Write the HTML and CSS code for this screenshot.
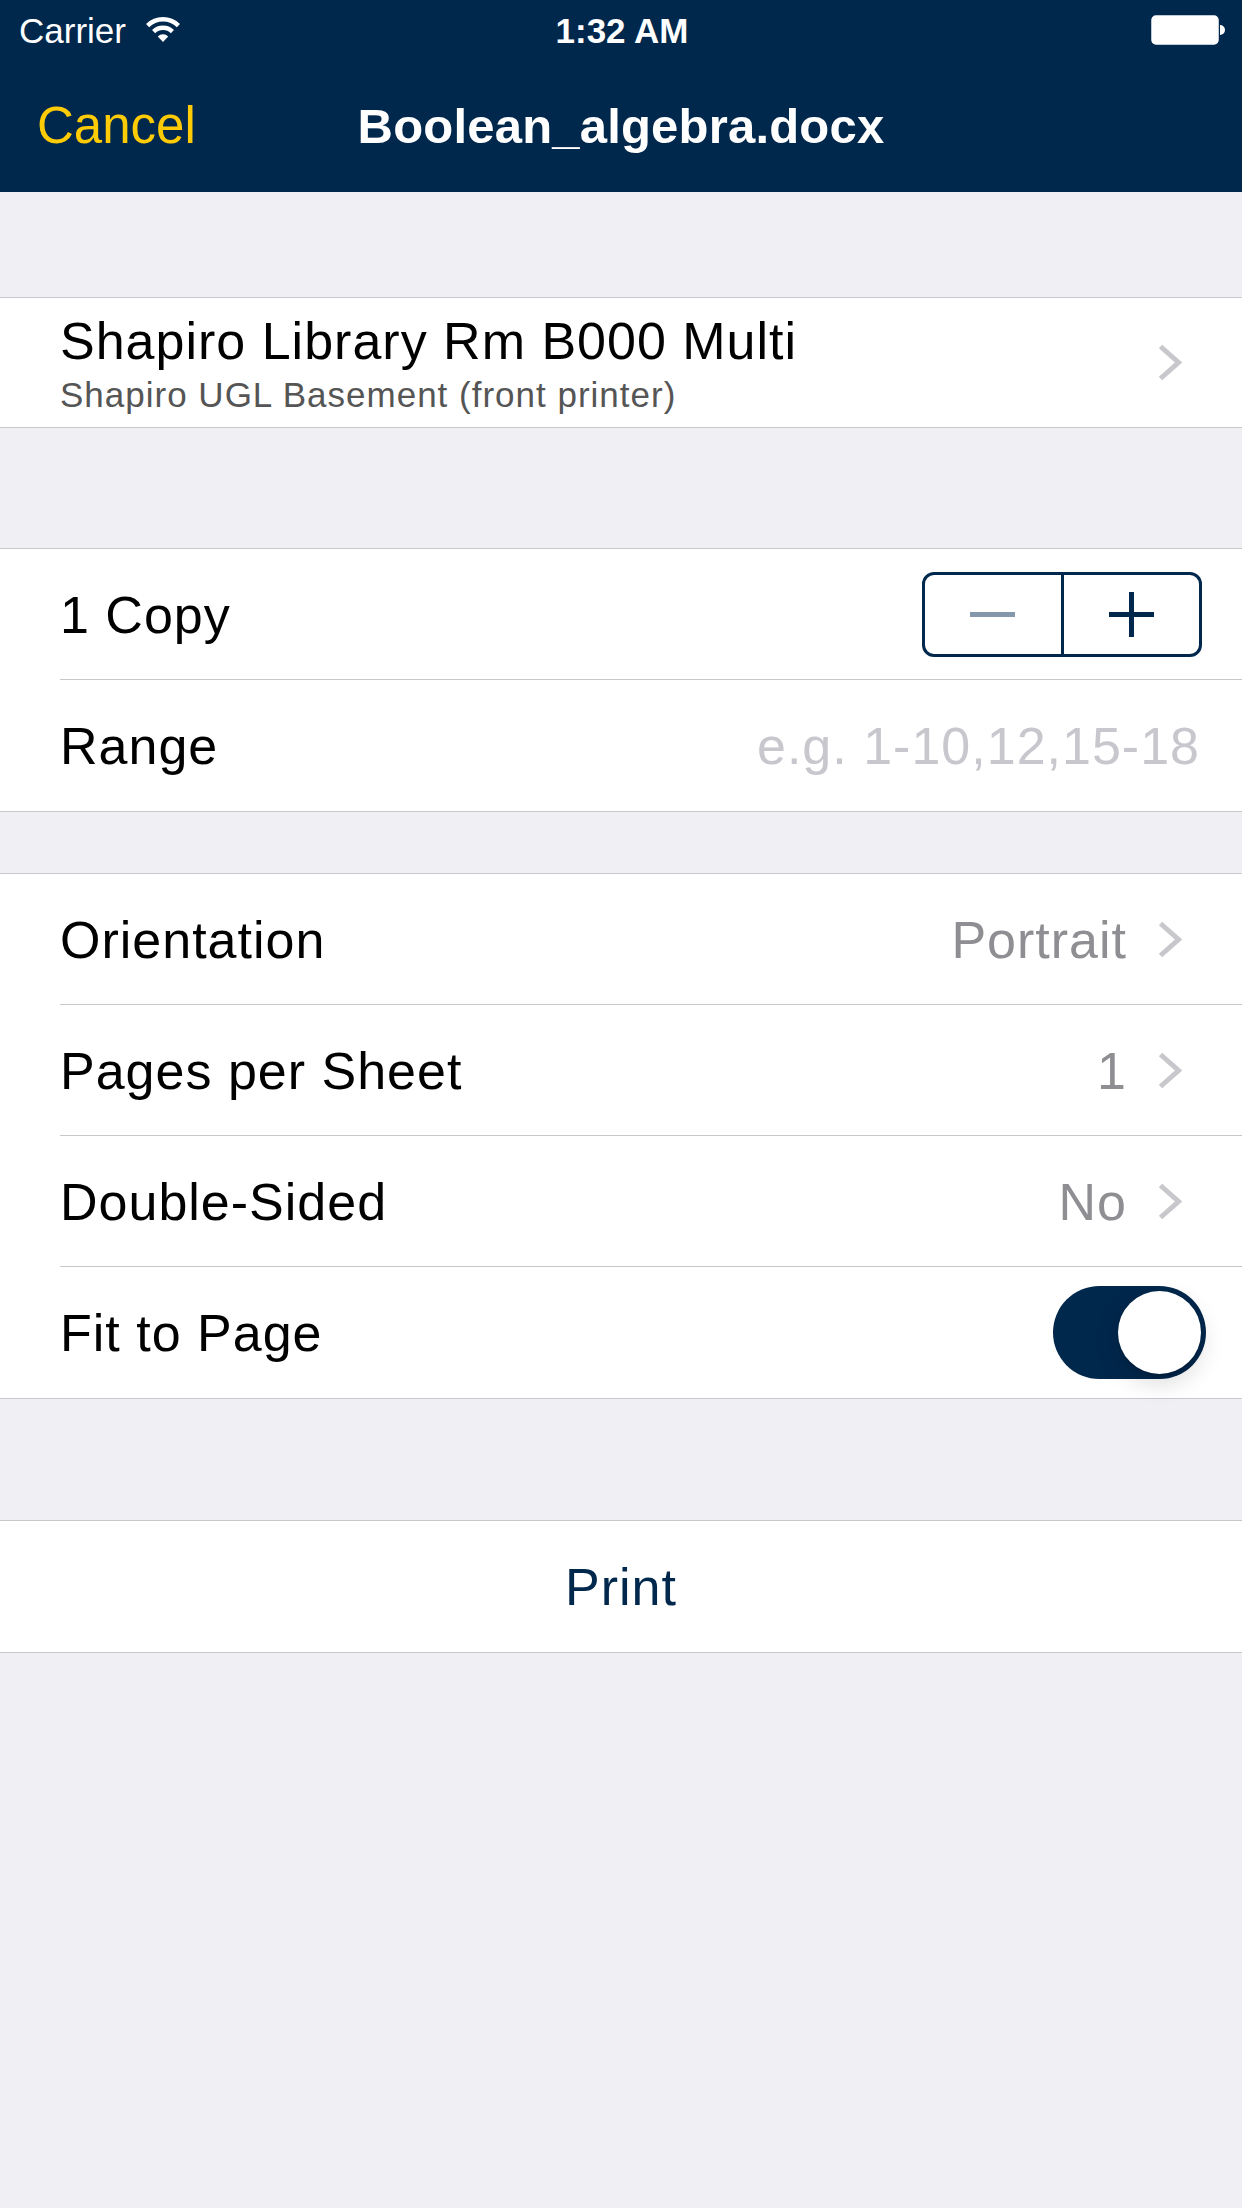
FILE: index.html
```html
<!DOCTYPE html>
<html lang="en">
<head>
<meta charset="utf-8">
<title>Print Options</title>
<link rel="stylesheet" href="styles.css">
</head>
<body>
<header class="topbar">
  <div class="status">
    <div class="status-left">
      <span class="carrier">Carrier</span>
      <svg class="wifi" width="36" height="26" viewBox="0 0 36 26">
        <path d="M2.6 9.6 A22 22 0 0 1 33.4 9.6" fill="none" stroke="#fff" stroke-width="4.5"/>
        <path d="M8.6 15.6 A13.5 13.5 0 0 1 27.4 15.6" fill="none" stroke="#fff" stroke-width="4.5"/>
        <path d="M18 26 L12.8 20.6 A7 7 0 0 1 23.2 20.6 Z" fill="#fff"/>
      </svg>
    </div>
    <span class="time">1:32 AM</span>
    <div class="status-right">
      <svg class="battery" width="74" height="30" viewBox="0 0 74 30">
        <rect x="1" y="1" width="66" height="28" rx="4" ry="4" fill="#fff" stroke="#fff" stroke-width="1.5"/>
        <path d="M69 10 A5 5 0 0 1 69 20 Z" fill="#fff"/>
      </svg>
    </div>
  </div>
  <div class="navbar">
    <span class="cancel">Cancel</span>
    <span class="title">Boolean_algebra.docx</span>
    <span class="spacer"></span>
  </div>
</header>

<main class="content">
  <section class="group group-first">
    <div class="row row-printer chev-row">
      <div class="printer-text">
        <div class="printer-name">Shapiro Library Rm B000 Multi</div>
        <div class="printer-sub">Shapiro UGL Basement (front printer)</div>
      </div>
      <svg class="chevron" width="24" height="37" viewBox="0 0 24 37"><path d="M2.5 2.5 L20.5 18.5 L2.5 34.5" fill="none" stroke="#c7c7cc" stroke-width="5"/></svg>
    </div>
  </section>

  <section class="group group-second">
    <div class="row row-stepper">
      <span class="label">1 Copy</span>
      <div class="stepper">
        <span class="step step-minus"><span class="minus-bar"></span></span>
        <span class="step step-plus"><span class="plus-h"></span><span class="plus-v"></span></span>
      </div>
    </div>
    <div class="row row-range">
      <span class="label">Range</span>
      <span class="placeholder">e.g. 1-10,12,15-18</span>
    </div>
  </section>

  <section class="group group-third">
    <div class="row chev-row">
      <span class="label">Orientation</span>
      <span class="value">Portrait</span>
      <svg class="chevron" width="24" height="37" viewBox="0 0 24 37"><path d="M2.5 2.5 L20.5 18.5 L2.5 34.5" fill="none" stroke="#c7c7cc" stroke-width="5"/></svg>
    </div>
    <div class="row chev-row">
      <span class="label">Pages per Sheet</span>
      <span class="value">1</span>
      <svg class="chevron" width="24" height="37" viewBox="0 0 24 37"><path d="M2.5 2.5 L20.5 18.5 L2.5 34.5" fill="none" stroke="#c7c7cc" stroke-width="5"/></svg>
    </div>
    <div class="row chev-row">
      <span class="label">Double-Sided</span>
      <span class="value">No</span>
      <svg class="chevron" width="24" height="37" viewBox="0 0 24 37"><path d="M2.5 2.5 L20.5 18.5 L2.5 34.5" fill="none" stroke="#c7c7cc" stroke-width="5"/></svg>
    </div>
    <div class="row row-switch">
      <span class="label">Fit to Page</span>
      <span class="switch"><span class="knob"></span></span>
    </div>
  </section>

  <section class="group group-fourth">
    <div class="row row-print">
      <span class="print">Print</span>
    </div>
  </section>
</main>
</body>
</html>
```

FILE: styles.css
```css
* {
  box-sizing: border-box;
}

html, body {
  margin: 0;
  padding: 0;
}

body {
  width: 1242px;
  min-height: 2208px;
  background: #efeff4;
  font-family: "Liberation Sans", Arial, sans-serif;
  color: #000;
}

.topbar {
  background: #00274c;
  height: 192px;
  color: #fff;
}

.status {
  height: 60px;
  display: grid;
  grid-template-columns: 1fr auto 1fr;
  align-items: center;
  padding: 0 17px 0 19px;
}

.status-left {
  display: flex;
  align-items: center;
  gap: 19px;
}

.carrier {
  font-size: 35px;
  line-height: 40px;
  margin-top: 2px;
}

.wifi {
  display: block;
  margin-top: -2px;
}

.time {
  font-size: 35px;
  font-weight: 700;
  line-height: 40px;
  margin-top: 2px;
}

.status-right {
  display: flex;
  justify-content: flex-end;
}

.battery {
  display: block;
}

.navbar {
  height: 132px;
  display: grid;
  grid-template-columns: 1fr auto 1fr;
  align-items: center;
  padding: 0 37px;
}

.cancel {
  color: #ffcb05;
  font-size: 51px;
  line-height: 60px;
}

.title {
  font-size: 49px;
  font-weight: 700;
  line-height: 60px;
  letter-spacing: 0.2px;
}

.content {
  display: flex;
  flex-direction: column;
}

.group {
  background: #fff;
  border-top: 1px solid #c8c7cc;
  border-bottom: 1px solid #c8c7cc;
}

.group-first {
  margin-top: 105px;
}

.group-second {
  margin-top: 120px;
}

.group-third {
  margin-top: 61px;
}

.group-fourth {
  margin-top: 121px;
}

.row {
  position: relative;
  display: flex;
  align-items: center;
  height: 131px;
  padding-left: 60px;
}

.row + .row::before {
  content: "";
  position: absolute;
  top: -1px;
  left: 60px;
  right: 0;
  height: 1px;
  background: #c8c7cc;
}

.label {
  font-size: 52px;
  line-height: 60px;
  letter-spacing: 1px;
  flex: 1;
}

.chev-row {
  padding-right: 60px;
}

.value {
  font-size: 52px;
  line-height: 60px;
  letter-spacing: 1px;
  color: #8e8e93;
  margin-right: 31px;
}

.chevron {
  display: block;
  flex: none;
}

.row-printer {
  height: 129px;
}

.printer-text {
  flex: 1;
  align-self: flex-start;
  padding-top: 13px;
}

.printer-name {
  font-size: 52px;
  line-height: 60px;
  letter-spacing: 1px;
}

.printer-sub {
  font-size: 35px;
  line-height: 42px;
  letter-spacing: 1px;
  color: #555;
  margin-top: 3px;
}

.row-stepper {
  padding-right: 40px;
}

.stepper {
  display: flex;
  width: 280px;
  height: 85px;
  border: 3px solid #00274c;
  border-radius: 12px;
  overflow: hidden;
}

.step {
  position: relative;
  flex: 1;
  display: flex;
  align-items: center;
  justify-content: center;
}

.step-minus {
  border-right: 3px solid #00274c;
}

.minus-bar {
  width: 45px;
  height: 5px;
  background: #8597ab;
}

.plus-h {
  position: absolute;
  width: 45px;
  height: 5px;
  background: #00274c;
}

.plus-v {
  position: absolute;
  width: 5px;
  height: 45px;
  background: #00274c;
}

.row-range {
  padding-right: 42px;
}

.placeholder {
  font-size: 52px;
  line-height: 60px;
  letter-spacing: 1px;
  color: #c7c7cd;
}

.row-switch {
  padding-right: 36px;
}

.switch {
  position: relative;
  width: 153px;
  height: 93px;
  border-radius: 47px;
  background: #00274c;
  flex: none;
}

.knob {
  position: absolute;
  top: 5px;
  right: 5px;
  width: 83px;
  height: 83px;
  border-radius: 50%;
  background: #fff;
  box-shadow: 0 9px 24px rgba(0, 0, 0, 0.15), 0 3px 3px rgba(0, 0, 0, 0.12);
}

.row-print {
  justify-content: center;
  padding-left: 0;
}

.print {
  font-size: 52px;
  line-height: 60px;
  letter-spacing: 1px;
  color: #00274c;
}
```
